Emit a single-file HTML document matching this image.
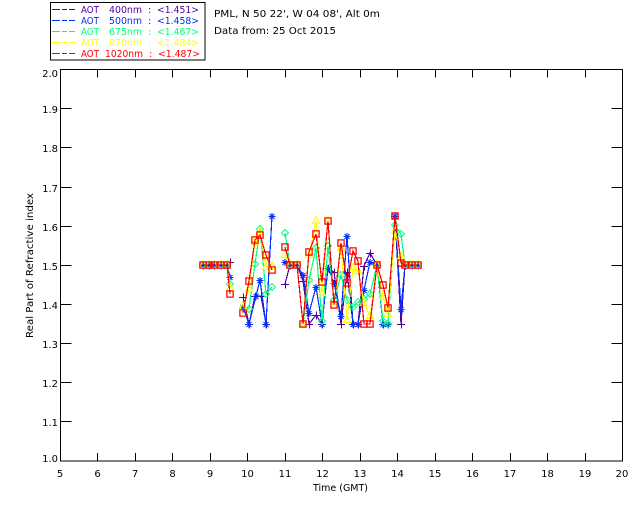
<!DOCTYPE html>
<html>
<head>
<meta charset="utf-8">
<style>
html,body{margin:0;padding:0;background:#fff;width:640px;height:512px;overflow:hidden}
svg{display:block}
text{font-family:"DejaVu Sans","Liberation Sans",sans-serif;font-size:10px;fill:#000}
.s{fill:none;stroke-width:1.2;stroke-linejoin:miter;shape-rendering:crispEdges}
.a{stroke:#000;stroke-width:1;fill:none;shape-rendering:crispEdges}
.m{text-anchor:middle}
.e{text-anchor:end}
.c1 text{fill:#5000a0}
.c2 text{fill:#0030ff}
.c3 text{fill:#00ff80}
.c4 text{fill:#ffff00}
.c5 text{fill:#ff0000}
</style>
</head>
<body>
<svg width="640" height="512" viewBox="0 0 640 512" xmlns="http://www.w3.org/2000/svg">
<defs>
<marker id="mp" markerUnits="userSpaceOnUse" markerWidth="14" markerHeight="14" refX="7" refY="7" overflow="visible"><path d="M3 7.5H11M7.5 3.5V11.5" stroke="#5000a0" stroke-width="1" fill="none" shape-rendering="crispEdges"/></marker>
<marker id="mb" markerUnits="userSpaceOnUse" markerWidth="14" markerHeight="14" refX="7" refY="7" overflow="visible"><path d="M3.5 7.5H10.5M7 4V11M4.5 5L9.5 10M9.5 5L4.5 10" stroke="#0030ff" stroke-width="1.1" fill="none"/></marker>
<marker id="mg" markerUnits="userSpaceOnUse" markerWidth="14" markerHeight="14" refX="7" refY="7" overflow="visible"><path d="M7 3.5L10.5 7L7 10.5L3.5 7Z" stroke="#00ff80" stroke-width="1" fill="none"/></marker>
<marker id="my" markerUnits="userSpaceOnUse" markerWidth="14" markerHeight="14" refX="7" refY="7" overflow="visible"><path d="M7 2.5L10.5 9.5H3.5Z" stroke="#ffff00" stroke-width="1.2" fill="none"/></marker>
<marker id="mr" markerUnits="userSpaceOnUse" markerWidth="14" markerHeight="14" refX="7" refY="7" overflow="visible"><path d="M3.25 3.25H10.75V10.75H3.25ZM4.5 4.5V9.5H9.5V4.5Z" fill="#ff0000" fill-rule="evenodd"/></marker>
</defs>

<!-- legend -->
<rect x="50.5" y="2.5" width="154.5" height="57.5" class="a"/>
<g shape-rendering="crispEdges" stroke-width="1" fill="none">
<path d="M52 9.5H60M62 9.5H67M69 9.5H75" stroke="#5000a0"/>
<path d="M52 20.5H60M62 20.5H67M69 20.5H75" stroke="#0030ff"/>
<path d="M52 31.5H60M62 31.5H67M69 31.5H75" stroke="#00ff80"/>
<path d="M52 42.5H60M62 42.5H67M69 42.5H75" stroke="#ffff00"/>
<path d="M52 53.5H60M62 53.5H67M69 53.5H75" stroke="#ff0000"/>
</g>
<g class="c1"><text x="81" y="13" textLength="18" lengthAdjust="spacingAndGlyphs">AOT</text><text x="109" y="13" textLength="33" lengthAdjust="spacingAndGlyphs">400nm</text><text x="148" y="13">:</text><text x="157" y="13" textLength="42" lengthAdjust="spacingAndGlyphs">&lt;1.451&gt;</text></g>
<g class="c2"><text x="81" y="24" textLength="18" lengthAdjust="spacingAndGlyphs">AOT</text><text x="109" y="24" textLength="33" lengthAdjust="spacingAndGlyphs">500nm</text><text x="148" y="24">:</text><text x="157" y="24" textLength="42" lengthAdjust="spacingAndGlyphs">&lt;1.458&gt;</text></g>
<g class="c3"><text x="81" y="35" textLength="18" lengthAdjust="spacingAndGlyphs">AOT</text><text x="109" y="35" textLength="33" lengthAdjust="spacingAndGlyphs">675nm</text><text x="148" y="35">:</text><text x="157" y="35" textLength="42" lengthAdjust="spacingAndGlyphs">&lt;1.467&gt;</text></g>
<g class="c4"><text x="81" y="46" textLength="18" lengthAdjust="spacingAndGlyphs">AOT</text><text x="109" y="46" textLength="33" lengthAdjust="spacingAndGlyphs">870nm</text><text x="148" y="46">:</text><text x="157" y="46" textLength="42" lengthAdjust="spacingAndGlyphs">&lt;1.484&gt;</text></g>
<g class="c5"><text x="81" y="57" textLength="18" lengthAdjust="spacingAndGlyphs">AOT</text><text x="105" y="57" textLength="38" lengthAdjust="spacingAndGlyphs">1020nm</text><text x="149" y="57">:</text><text x="158" y="57" textLength="42" lengthAdjust="spacingAndGlyphs">&lt;1.487&gt;</text></g>

<text x="214" y="17" textLength="166" lengthAdjust="spacingAndGlyphs">PML, N 50 22', W 04 08', Alt 0m</text>
<text x="214" y="34" textLength="122" lengthAdjust="spacingAndGlyphs">Data from: 25 Oct 2015</text>

<!-- axes -->
<rect x="60.5" y="69.5" width="562" height="391.5" class="a"/>
<path class="a" d="M97.5 69.5v8M135.5 69.5v8M172.5 69.5v8M210.5 69.5v8M247.5 69.5v8M285.5 69.5v8M322.5 69.5v8M360.5 69.5v8M397.5 69.5v8M435.5 69.5v8M472.5 69.5v8M510.5 69.5v8M547.5 69.5v8M585.5 69.5v8
M97.5 461v-8M135.5 461v-8M172.5 461v-8M210.5 461v-8M247.5 461v-8M285.5 461v-8M322.5 461v-8M360.5 461v-8M397.5 461v-8M435.5 461v-8M472.5 461v-8M510.5 461v-8M547.5 461v-8M585.5 461v-8
M60.5 108.5h11M60.5 147.5h11M60.5 187.5h11M60.5 226.5h11M60.5 265.5h11M60.5 304.5h11M60.5 343.5h11M60.5 382.5h11M60.5 421.5h11
M622.5 108.5h-11M622.5 147.5h-11M622.5 187.5h-11M622.5 226.5h-11M622.5 265.5h-11M622.5 304.5h-11M622.5 343.5h-11M622.5 382.5h-11M622.5 421.5h-11"/>

<!-- y labels -->
<text x="58" y="77" class="e">2.0</text>
<text x="58" y="113" class="e">1.9</text>
<text x="58" y="152" class="e">1.8</text>
<text x="58" y="192" class="e">1.7</text>
<text x="58" y="231" class="e">1.6</text>
<text x="58" y="270" class="e">1.5</text>
<text x="58" y="309" class="e">1.4</text>
<text x="58" y="348" class="e">1.3</text>
<text x="58" y="387" class="e">1.2</text>
<text x="58" y="426" class="e">1.1</text>
<text x="58" y="462" class="e">1.0</text>

<!-- x labels -->
<text x="60" y="477" class="m">5</text>
<text x="97.5" y="477" class="m">6</text>
<text x="135" y="477" class="m">7</text>
<text x="172.5" y="477" class="m">8</text>
<text x="210" y="477" class="m">9</text>
<text x="247.5" y="477" class="m">10</text>
<text x="285" y="477" class="m">11</text>
<text x="322.5" y="477" class="m">12</text>
<text x="360" y="477" class="m">13</text>
<text x="397.5" y="477" class="m">14</text>
<text x="435" y="477" class="m">15</text>
<text x="472.5" y="477" class="m">16</text>
<text x="510" y="477" class="m">17</text>
<text x="547.5" y="477" class="m">18</text>
<text x="585" y="477" class="m">19</text>
<text x="622" y="477" class="m">20</text>

<text x="313" y="491" textLength="55" lengthAdjust="spacingAndGlyphs">Time (GMT)</text>
<text transform="translate(33,338) rotate(-90)" textLength="145" lengthAdjust="spacingAndGlyphs">Real Part of Refractive index</text>

<!-- data: purple -->
<polyline class="s" stroke="#5000a0" marker-start="url(#mp)" marker-mid="url(#mp)" marker-end="url(#mp)" points="203,265 209,265 214,265 221,265 227,265 230,262"/>
<polyline class="s" stroke="#5000a0" marker-start="url(#mp)" marker-mid="url(#mp)" marker-end="url(#mp)" points="243,297 249,324 255,296 261,296 266,324"/>
<polyline class="s" stroke="#5000a0" marker-start="url(#mp)" marker-mid="url(#mp)" marker-end="url(#mp)" points="285,284 290,265 297,265 303,281 309,324 316,315 322,324 328,268 334,272 341,324 347,272 353,324 358,324 364,266 370,253 377,265 383,324 388,324 395,216 401,324 405,265 412,265 418,265"/>
<!-- data: blue -->
<polyline class="s" stroke="#0030ff" marker-start="url(#mb)" marker-mid="url(#mb)" marker-end="url(#mb)" points="203,265 209,265 214,265 221,265 227,265 230,277"/>
<polyline class="s" stroke="#0030ff" marker-start="url(#mb)" marker-mid="url(#mb)" marker-end="url(#mb)" points="243,307 249,324 256,296 260,280 266,324 272,216"/>
<polyline class="s" stroke="#0030ff" marker-start="url(#mb)" marker-mid="url(#mb)" marker-end="url(#mb)" points="285,262 290,265 297,265 303,275 309,313 316,287 322,324 328,268 334,283 341,316 347,236 353,324 358,324 364,290 370,262 377,265 383,324 388,324 395,216 401,309 405,265 412,265 418,265"/>
<!-- data: green -->
<polyline class="s" stroke="#00ff80" marker-start="url(#mg)" marker-mid="url(#mg)" marker-end="url(#mg)" points="203,265 209,265 214,265 221,265 227,265 230,284"/>
<polyline class="s" stroke="#00ff80" marker-start="url(#mg)" marker-mid="url(#mg)" marker-end="url(#mg)" points="243,308 249,309 255,264 260,229 266,294 272,287"/>
<polyline class="s" stroke="#00ff80" marker-start="url(#mg)" marker-mid="url(#mg)" marker-end="url(#mg)" points="285,233 290,265 297,265 303,324 309,280 316,248 322,321 328,246 334,300 341,275 347,300 353,307 358,302 364,299 370,294 377,265 383,321 388,324 395,225 401,234 405,265 412,265 418,265"/>
<!-- data: yellow -->
<polyline class="s" stroke="#ffff00" marker-start="url(#my)" marker-mid="url(#my)" marker-end="url(#my)" points="203,265 209,265 214,265 221,265 227,265 230,288"/>
<polyline class="s" stroke="#ffff00" marker-start="url(#my)" marker-mid="url(#my)" marker-end="url(#my)" points="243,307 249,289 255,242 260,232 266,267 272,266"/>
<polyline class="s" stroke="#ffff00" marker-start="url(#my)" marker-mid="url(#my)" marker-end="url(#my)" points="285,255 290,265 297,265 303,324 309,255 316,221 322,293 328,221 334,305 341,248 347,320 353,268 358,271 364,303 370,316 377,265 383,297 388,314 395,231 401,257 405,265 412,265 418,265"/>
<!-- data: red -->
<polyline class="s" stroke="#ff0000" marker-start="url(#mr)" marker-mid="url(#mr)" marker-end="url(#mr)" points="203,265 209,265 214,265 221,265 227,265 230,294"/>
<polyline class="s" stroke="#ff0000" marker-start="url(#mr)" marker-mid="url(#mr)" marker-end="url(#mr)" points="243,313 249,281 255,240 260,235 266,255 272,270"/>
<polyline class="s" stroke="#ff0000" marker-start="url(#mr)" marker-mid="url(#mr)" marker-end="url(#mr)" points="285,247 290,265 297,265 303,324 309,252 316,234 322,282 328,221 334,305 341,243 347,283 353,251 358,261 364,324 370,324 377,265 383,285 388,308 395,216 401,263 405,265 412,265 418,265"/>
</svg>
</body>
</html>
